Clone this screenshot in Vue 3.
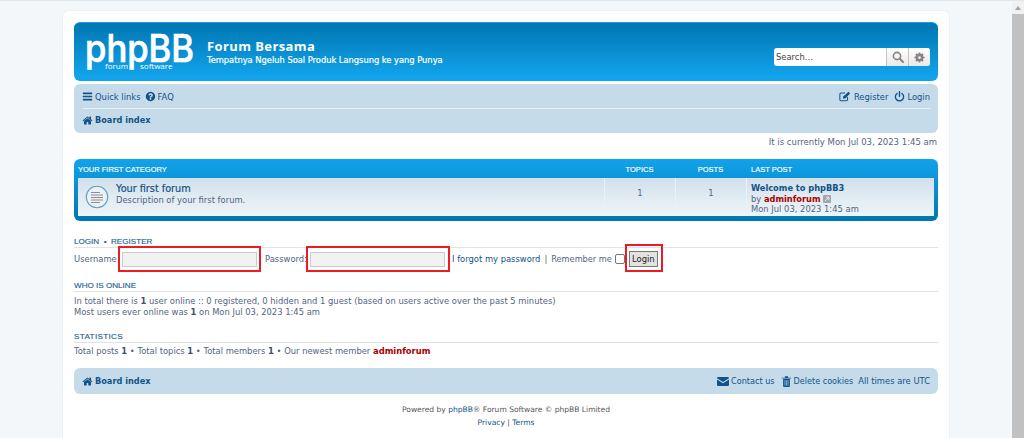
<template>
  <div class="page">
    <div class="wrap">
      <header class="headerbar">
        <div class="logo" role="img" aria-label="phpBB forum software">
          <svg width="116" height="42" viewBox="0 0 116 42">
            <text class="logo-big" x="1" y="30" textLength="109" lengthAdjust="spacingAndGlyphs">phpBB</text>
            <text class="logo-small" x="21" y="37">forum</text>
            <text class="logo-small" x="56" y="37">software</text>
          </svg>
        </div>
        <div class="site">
          <div class="site-title">Forum Bersama</div>
          <div class="site-sub">Tempatnya Ngeluh Soal Produk Langsung ke yang Punya</div>
        </div>
        <div class="search">
          <span class="search-input">Search…</span>
          <span class="search-btn">
            <svg width="12" height="12" viewBox="0 0 12 12"><circle cx="5" cy="5" r="3.6" fill="none" stroke="#8a8580" stroke-width="1.6"/><path d="M7.8 7.8L11 11" stroke="#8a8580" stroke-width="2" stroke-linecap="round"/></svg>
          </span>
          <span class="search-btn">
            <svg width="11" height="11" viewBox="0 0 12 12"><circle cx="6" cy="6" r="3.2" fill="none" stroke="#8a8580" stroke-width="2.4"/><path d="M6 0.5v11M0.5 6h11M2.1 2.1l7.8 7.8M9.9 2.1l-7.8 7.8" stroke="#8a8580" stroke-width="1.7"/><circle cx="6" cy="6" r="1.5" fill="#eeeeee"/></svg>
          </span>
        </div>
      </header>

      <nav class="navbar">
        <div class="nav-row line">
          <span class="nav-item">
            <svg class="ic" viewBox="0 0 1792 1792"><path d="M1664 1344v128q0 26-19 45t-45 19h-1408q-26 0-45-19t-19-45v-128q0-26 19-45t45-19h1408q26 0 45 19t19 45zm0-512v128q0 26-19 45t-45 19h-1408q-26 0-45-19t-19-45v-128q0-26 19-45t45-19h1408q26 0 45 19t19 45zm0-512v128q0 26-19 45t-45 19h-1408q-26 0-45-19t-19-45v-128q0-26 19-45t45-19h1408q26 0 45 19t19 45z"/></svg>
            Quick links
          </span>
          <span class="nav-item">
            <svg class="ic" viewBox="0 0 1792 1792"><path d="M1024 1376v-192q0-14-9-23t-23-9h-192q-14 0-23 9t-9 23v192q0 14 9 23t23 9h192q14 0 23-9t9-23zm256-672q0-88-55.500-163t-138.500-116-170-41q-243 0-371 213-15 24 8 42l132 100q7 6 19 6 16 0 25-12 53-68 86-92 34-24 86-24 48 0 85.500 26t37.500 59q0 38-20 61t-68 45q-63 28-115.500 86.500t-52.500 125.500v36q0 14 9 23t23 9h192q14 0 23-9t9-23q0-19 21.500-49.500t54.500-49.500q32-18 49-28.500t46-35 44.500-48 28-60.500 12.500-81zm384 192q0 209-103 385.500t-279.500 279.500-385.500 103-385.500-103-279.500-279.500-103-385.500 103-385.500 279.500-279.500 385.500-103 385.500 103 279.500 279.500 103 385.500z"/></svg>
            FAQ
          </span>
          <span class="spacer"></span>
          <span class="nav-item reg">
            <svg class="ic wide" viewBox="0 0 14 12"><path d="M10 6.500v3A1.500 1.500 0 0 1 8.500 11H2.500A1.500 1.500 0 0 1 1 9.500V3.500A1.500 1.500 0 0 1 2.500 2H7" fill="none" stroke="#105289" stroke-width="1.200"/><path d="M4.500 8.500l.5-2.500L11 0.500l2 2-5.500 5.500z" fill="#105289"/></svg>
            Register
          </span>
          <span class="nav-item">
            <svg class="ic" viewBox="0 0 12 12"><path d="M3.300 2.700a4.500 4.500 0 1 0 5.400 0" fill="none" stroke="#105289" stroke-width="1.500" stroke-linecap="round"/><path d="M6 0.800v5" stroke="#105289" stroke-width="1.600" stroke-linecap="round"/></svg>
            Login
          </span>
        </div>
        <div class="nav-row crumb">
          <span class="nav-item">
            <svg class="ic" viewBox="0 0 1792 1792"><path d="M1472 992v480q0 26-19 45t-45 19h-384v-384h-256v384h-384q-26 0-45-19t-19-45v-480q0-1 .5-3t.5-3l575-474 575 474q1 2 1 6zm223-69l-62 74q-8 9-21 11h-3q-13 0-21-7l-692-577-692 577q-12 8-24 7-13-2-21-11l-62-74q-8-10-7-23.500t11-21.500l719-599q32-26 76-26t76 26l244 204v-195q0-14 9-23t23-9h192q14 0 23 9t9 23v408l219 182q10 8 11 21.500t-7 23.500z"/></svg>
            <b>Board index</b>
          </span>
        </div>
      </nav>

      <p class="time">It is currently Mon Jul 03, 2023 1:45 am</p>

      <section class="forabg">
        <div class="cat-row">
          <span class="c-main">YOUR FIRST CATEGORY</span>
          <span class="c-num">TOPICS</span>
          <span class="c-num">POSTS</span>
          <span class="c-last">LAST POST</span>
        </div>
        <div class="forum-row">
          <div class="c-main forum-main">
            <svg class="forum-ic" width="24" height="24" viewBox="0 0 24 24">
              <circle cx="12" cy="12" r="10.700" fill="#eef1f3" stroke="#5a9fcc" stroke-width="1.100"/>
              <path d="M6 7.500h9M6 10h12M6 12.500h12M6 15h12M6 17.500h9" stroke="#8b8f93" stroke-width="1.100"/>
            </svg>
            <div class="forum-text">
              <div class="forum-name">Your first forum</div>
              <div class="forum-desc">Description of your first forum.</div>
            </div>
          </div>
          <div class="c-num cell">1</div>
          <div class="c-num cell">1</div>
          <div class="c-last cell last-post">
            <div class="post-title">Welcome to phpBB3</div>
            <div>by <b class="red">adminforum</b>
              <svg class="post-ic" width="8" height="8" viewBox="0 0 8 8"><rect width="8" height="8" rx="1" fill="#a3a7a9"/><path d="M2 6l3.500-3.500M3 2.200h2.800V5" stroke="#e6eaed" stroke-width="1" fill="none"/></svg>
            </div>
            <div>Mon Jul 03, 2023 1:45 am</div>
          </div>
        </div>
      </section>

      <section class="login">
        <h3 class="h3">LOGIN &nbsp;•&nbsp; REGISTER</h3>
        <div class="login-row">
          <label>Username</label>
          <span class="mark m-user"><span class="field"></span></span>
          <label class="pw">Password:</label>
          <span class="mark m-pass"><span class="field"></span></span>
          <span class="forgot">I forgot my password</span>
          <span class="sep">|</span>
          <span class="remember">Remember me</span>
          <span class="check"></span>
          <span class="mark m-btn"><span class="btn">Login</span></span>
        </div>
      </section>

      <section class="online">
        <h3 class="h3">WHO IS ONLINE</h3>
        <p>In total there is <b>1</b> user online :: 0 registered, 0 hidden and 1 guest (based on users active over the past 5 minutes)</p>
        <p>Most users ever online was <b>1</b> on Mon Jul 03, 2023 1:45 am</p>
      </section>

      <section class="stats">
        <h3 class="h3 wide-h">STATISTICS</h3>
        <p>Total posts <b>1</b> • Total topics <b>1</b> • Total members <b>1</b> • Our newest member <b class="red">adminforum</b></p>
      </section>

      <nav class="navbar foot">
        <div class="nav-row">
          <span class="nav-item">
            <svg class="ic" viewBox="0 0 1792 1792"><path d="M1472 992v480q0 26-19 45t-45 19h-384v-384h-256v384h-384q-26 0-45-19t-19-45v-480q0-1 .5-3t.5-3l575-474 575 474q1 2 1 6zm223-69l-62 74q-8 9-21 11h-3q-13 0-21-7l-692-577-692 577q-12 8-24 7-13-2-21-11l-62-74q-8-10-7-23.500t11-21.500l719-599q32-26 76-26t76 26l244 204v-195q0-14 9-23t23-9h192q14 0 23 9t9 23v408l219 182q10 8 11 21.500t-7 23.500z"/></svg>
            <b class="foot-crumb">Board index</b>
          </span>
          <span class="spacer"></span>
          <span class="nav-item foot-item contact">
            <svg class="ic env" viewBox="0 0 12 9"><path d="M0 1.200A1.200 1.200 0 0 1 1.200 0h9.600A1.200 1.200 0 0 1 12 1.200L6 5 0 1.200z"/><path d="M0 2.500L6 6.300 12 2.500V7.800A1.200 1.200 0 0 1 10.800 9H1.200A1.200 1.200 0 0 1 0 7.800z"/></svg>
            Contact us
          </span>
          <span class="nav-item foot-item">
            <svg class="ic" viewBox="0 0 10 12"><path d="M0 1.800h10v1H0zM3.300 1.800V.4h3.400v1.400" fill="#105289"/><path d="M1.300 3.300h7.400V11a1 1 0 0 1-1 1H2.300a1 1 0 0 1-1-1z" fill="#105289"/><path d="M3.300 4.500v6M5 4.500v6M6.700 4.500v6" stroke="#c6dbe9" stroke-width=".7"/></svg>
            Delete cookies
          </span>
          <span class="utc">All times are UTC</span>
        </div>
      </nav>

      <footer class="copy">
        <p>Powered by <span class="lnk">phpBB</span>® Forum Software © phpBB Limited</p>
        <p class="terms"><span class="lnk">Privacy</span> | <span class="lnk">Terms</span></p>
      </footer>
    </div>
    <div class="scrollbar">
      <span class="arrow"></span>
      <span class="thumb"></span>
    </div>
  </div>
</template>

<script setup>
</script>

<style>
html, body { margin: 0; height: 100%; overflow: hidden; background: #f4f7fa; }
</style>

<style scoped>
.page {
  height: 438px;
  overflow: hidden;
  box-sizing: border-box;
  border-top: 1px solid #e2e6ea;
  padding: 10px 0 0 63px;
  font-family: "DejaVu Sans", Verdana, sans-serif;
  font-size: 8.4px;
  color: #536482;
  position: relative;
}
p { margin: 0; }
b { font-weight: 700; }
.wrap {
  width: 864px;
  padding: 11px 11px 40px;
  background: #fff;
  border-radius: 6px;
  box-shadow: 0 0 0 1px #eef1f4;
  height: 420px;
}
.headerbar {
  height: 59px;
  box-sizing: border-box;
  border-radius: 6px;
  background: linear-gradient(#0076b1, #12a3eb 92%);
  border-top: 1px solid #12a3eb;
  display: flex;
  align-items: flex-start;
  padding: 0 8px 0 10px;
  color: #fff;
}
.logo { width: 123px; padding-top: 9px; height: 42px; flex: none; }
.logo svg { overflow: visible; display: block; }
.logo-big { font-family: "Inter", "Open Sans", sans-serif; font-size: 38px; font-weight: 500; fill: #fff; stroke: #fff; stroke-width: .7px; }
.logo-small { font-family: "Open Sans", sans-serif; font-size: 8px; fill: #fff; }
.site { padding-top: 15px; }
.site-title { font-size: 13px; font-weight: 700; font-family: "Open Sans", "DejaVu Sans", sans-serif; line-height: 16px; letter-spacing: .4px; }
.site-sub { font-size: 8.300px; line-height: 12px; margin-top: 0; -webkit-text-stroke: .2px #fff; }
.search {
  margin: 25px 0 0 auto;
  height: 18px;
  width: 156px;
  display: flex;
  background: #fff;
  border-radius: 3px;
  overflow: hidden;
  flex: none;
}
.search-input { flex: 1; color: #444; line-height: 18px; padding-left: 2px; }
.search-btn {
  width: 21px;
  background: linear-gradient(#fff, #e9e9e9);
  border-left: 1px solid #c7c3bf;
  display: flex;
  align-items: center;
  justify-content: center;
}
.navbar {
  margin-top: 3px;
  background: #c6dbe9;
  border-radius: 6px;
  padding: 2px 8px 0;
  height: 49px;
  box-sizing: border-box;
  color: #105289;
}
.nav-row { display: flex; align-items: center; gap: 4px; }
.nav-row.line { height: 21px; padding-bottom: 1px; border-bottom: 1px solid #e9f1f6; }
.nav-item { display: inline-flex; align-items: center; gap: 2px; }
.reg { margin-right: 2px; gap: 3px; }
.nav-row .spacer { flex: 1; }
.crumb { height: 22px; font-size: 8.200px; }
.ic { width: 11px; height: 11px; fill: #105289; flex: none; }
.ic.wide { width: 12px; }
.ic.env { width: 12px; height: 9px; }
.time { text-align: right; margin-top: 1px; line-height: 11px; padding: 3px 1px 0 0; height: 14px; font-size: 8.500px; }
.forabg {
  margin-top: 8px;
  height: 62px;
  box-sizing: border-box;
  background: linear-gradient(#12a3eb, #0076b1);
  border-radius: 6px;
  padding: 0 4px 5px;
}
.cat-row {
  height: 19px;
  padding-top: 1px;
  box-sizing: border-box;
  display: flex;
  align-items: center;
  color: #fff;
  font-family: "Liberation Sans", Arial, sans-serif;
  font-size: 7.500px;
  -webkit-text-stroke: .15px #fff;
}
.c-main { width: 526px; flex: none; }
.c-num { width: 71px; flex: none; text-align: center; }
.c-last { flex: 1; padding-left: 5px; }
.forum-row {
  height: 38px;
  display: flex;
  background: linear-gradient(#d2e0eb, #eef5f9);
}
.forum-main { display: flex; align-items: center; gap: 7px; padding-left: 7px; box-sizing: border-box; }
.forum-ic { flex: none; }
.forum-text { padding-bottom: 6px; }
.forum-name { font-size: 9.700px; -webkit-text-stroke: .2px #105289; color: #105289; line-height: 12px; }
.forum-desc { line-height: 11px; }
.cell { border-left: 1px solid #eaf2f7; box-sizing: border-box; line-height: 30px; }
.last-post { line-height: 10.500px; padding: 5px 0 0 4px; }
.post-title { color: #105289; font-weight: 700; font-size: 8.250px; }
.last-post b { font-size: 8.250px; }
.red { color: #aa0000; }
.post-ic { margin-left: 2px; vertical-align: -1px; }
.h3 {
  margin: 0;
  color: #1d5f96;
  font-family: "Liberation Sans", Arial, sans-serif;
  font-size: 8.100px;
  font-weight: 400;
  -webkit-text-stroke: .15px #1d5f96;
  line-height: 11px;
  height: 11px;
  border-bottom: 1px solid #e1e3e6;
}
.h3.wide-h { letter-spacing: .35px; }
.login { margin-top: 15px; }
.login-row { display: flex; align-items: center; height: 22px; position: relative; }
.login-row label { width: 48px; flex: none; }
.login-row .pw { width: 45px; margin-left: 8px; }
.field {
  display: block;
  width: 135px;
  height: 15px;
  box-sizing: border-box;
  background: #f1f3f3;
  border: 1px solid #c9cccc;
}
.mark { position: relative; display: block; flex: none; }
.mark::after {
  content: "";
  position: absolute;
  left: -4px;
  right: -4px;
  top: -6px;
  bottom: -5px;
  border: 2px solid #ed1c24;
  pointer-events: none;
}
.m-pass::after { right: -5px; }
.m-btn::after { left: 0; right: -5px; top: -7px; bottom: -5px; }
.forgot { color: #105289; margin-left: 7px; }
.sep { margin: 0 4px; }
.remember { font-size: 8.200px; }
.check {
  display: block;
  width: 8px;
  height: 8px;
  margin-left: 3px;
  border: 1px solid #767676;
  border-radius: 2px;
  background: #fff;
  flex: none;
}
.btn {
  display: block;
  margin-left: 4px;
  width: 29px;
  height: 16px;
  box-sizing: border-box;
  background: #e2e2de;
  border: 1px solid #777;
  color: #222;
  text-align: center;
  line-height: 14px;
}
.online { margin-top: 10px; line-height: 11px; }
.online .h3 { margin-bottom: 4px; }
.stats { margin-top: 13px; line-height: 11px; }
.stats .h3 { margin-bottom: 3px; }
.online b, .stats b:not(.red) { color: #3d4f6b; }
.navbar.foot { margin-top: 11px; height: 26px; padding-top: 0; }
.foot .nav-row { height: 26px; }
.foot-crumb { font-size: 8.200px; }
.foot-item { font-size: 8.100px; margin-right: 1px; }
.foot-item.contact { margin-right: 2px; }
.copy { text-align: center; margin-top: 9px; font-size: 7.560px; line-height: 13px; color: #555; }
.lnk { color: #105289; }
.scrollbar {
  position: absolute;
  top: 0;
  right: 0;
  width: 12px;
  height: 100%;
  background: #f1f1f1;
}
.arrow {
  position: absolute;
  top: 5px;
  left: 3px;
  border-left: 3px solid transparent;
  border-right: 3px solid transparent;
  border-bottom: 4px solid #a3a3a3;
}
.thumb {
  position: absolute;
  top: 13px;
  left: 0;
  right: 0;
  bottom: 0;
  background: #c1c1c1;
}
</style>
